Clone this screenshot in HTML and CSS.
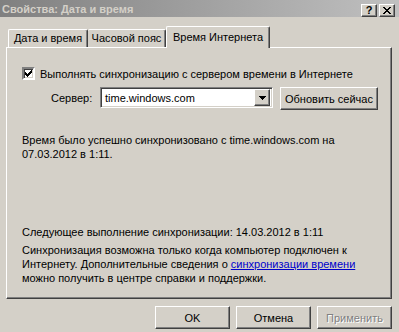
FILE: index.html
```html
<!DOCTYPE html>
<html lang="ru">
<head>
    <meta charset="UTF-8">
    <title>Свойства: Дата и время</title>
    <link rel="stylesheet" href="styles.css">
</head>
<body>
    <div class="window">
        <div class="titlebar">
            <span class="title">Свойства: Дата и время</span>
            <span class="cap-btn help">?</span>
            <span class="cap-btn close">
                <svg width="8" height="7" viewBox="0 0 8 7"><path d="M0 0h2v1h1v1h2V1h1V0h2v1H7v1H6v1H5v1h1v1h1v1h1v1H6V6H5V5H3v1H2v1H0V6h1V5h1V4h1V3H2V2H1V1H0z" fill="#000"/></svg>
            </span>
        </div>

        <div class="tabs">
            <div class="tab tab-date">Дата и время</div>
            <div class="tab tab-zone">Часовой пояс</div>
            <div class="tab tab-active">Время Интернета</div>
        </div>

        <div class="panel">
            <div class="check-row">
                <span class="checkbox">
                    <svg width="7" height="7" viewBox="0 0 7 7"><path d="M6 0h1v3H6v1H5v1H4v1H3v1H2V6H1V5H0V2h1v1h1v1h1V3h1V2h1V1h1z" fill="#000"/></svg>
                </span>
                <span>Выполнять синхронизацию с сервером времени в Интернете</span>
            </div>

            <div class="server-row">
                <span class="server-label">Сервер:</span>
                <div class="combo">
                    <span class="combo-value">time.windows.com</span>
                    <span class="combo-arrow">
                        <svg width="7" height="4" viewBox="0 0 7 4"><path d="M0 0h7v1H6v1H5v1H4v1H3V3H2V2H1V1H0z" fill="#000"/></svg>
                    </span>
                </div>
                <button class="button btn-update">Обновить сейчас</button>
            </div>

            <p class="status">Время было успешно синхронизовано с time.windows.com на<br>07.03.2012 в 1:11.</p>

            <p class="next">Следующее выполнение синхронизации: 14.03.2012 в 1:11</p>

            <p class="info">Синхронизация возможна только когда компьютер подключен к<br>Интернету. Дополнительные сведения о <a href="#">синхронизации времени</a><br>можно получить в центре справки и поддержки.</p>
        </div>

        <div class="footer">
            <button class="button">OK</button>
            <button class="button">Отмена</button>
            <button class="button" disabled>Применить</button>
        </div>
    </div>
</body>
</html>
```

FILE: styles.css
```css
body {
    margin: 0;
    padding: 0;
    background: #d4d0c8;
    font-family: 'Liberation Sans', Arial, sans-serif;
    font-size: 11px;
    line-height: 14px;
    color: #000;
    overflow: hidden;
}
.window {
    width: 399px;
    height: 332px;
    display: flex;
    flex-direction: column;
}
.titlebar {
    height: 17px;
    display: flex;
    align-items: center;
    padding: 0 4px 0 2px;
    background: linear-gradient(to right, #808080, #c0c0c0);
}
.title {
    color: #d4d0c8;
    font-weight: bold;
    flex: 1;
}
.cap-btn {
    width: 14px;
    height: 11px;
    margin-top: 3px;
    display: flex;
    align-items: center;
    justify-content: center;
    background: #d4d0c8;
    border-top: 1px solid #fff;
    border-left: 1px solid #fff;
    border-right: 1px solid #404040;
    border-bottom: 1px solid #404040;
    box-shadow: inset -1px -1px 0 #808080;
}
.help {
    font-weight: bold;
    font-size: 11px;
    line-height: 11px;
}
.close {
    margin-left: 2px;
}
.tabs {
    display: flex;
    align-items: flex-end;
    margin: 9px 0 0 8px;
    height: 21px;
    position: relative;
    z-index: 1;
}
.tab {
    height: 17px;
    box-sizing: border-box;
    padding-top: 1px;
    text-align: center;
    border-top: 1px solid #fff;
    border-left: 1px solid #fff;
    border-right: 1px solid #404040;
    border-radius: 2px 2px 0 0;
    box-shadow: inset -1px 0 0 #808080;
}
.tab-date {
    width: 80px;
    height: 18px;
}
.tab-zone {
    width: 78px;
    height: 18px;
    border-left: none;
}
.tab-active {
    width: 104px;
    height: 22px;
    margin-bottom: -1px;
    margin-left: 0;
    padding-top: 3px;
    background: #d4d0c8;
}
.panel {
    margin: 0 7px 0 6px;
    height: 252px;
    box-sizing: border-box;
    padding: 0 0 0 15px;
    border-top: 1px solid #fff;
    border-left: 1px solid #fff;
    border-right: 1px solid #404040;
    border-bottom: 1px solid #404040;
    box-shadow: inset -1px -1px 0 #808080;
}
.check-row {
    display: flex;
    align-items: center;
    height: 13px;
    margin-top: 19px;
}
.checkbox {
    width: 9px;
    height: 9px;
    margin-right: 5px;
    display: flex;
    align-items: center;
    justify-content: center;
    background: #fff;
    border-top: 2px solid #808080;
    border-left: 2px solid #808080;
    border-right: 2px solid #fff;
    border-bottom: 2px solid #fff;
    box-shadow: inset 1px 1px 0 #404040, inset -1px -1px 0 #d4d0c8;
}
.server-row {
    display: flex;
    align-items: flex-start;
    margin-top: 7px;
    height: 23px;
}
.server-label {
    margin: 4px 0 0 29px;
    width: 49px;
}
.combo {
    width: 173px;
    height: 21px;
    box-sizing: border-box;
    display: flex;
    align-items: center;
    background: #fff;
    border-top: 1px solid #808080;
    border-left: 1px solid #808080;
    border-right: 1px solid #fff;
    border-bottom: 1px solid #fff;
    box-shadow: inset 1px 1px 0 #404040, inset -1px -1px 0 #d4d0c8;
    padding: 2px;
}
.combo-value {
    flex: 1;
    padding-left: 2px;
}
.combo-arrow {
    width: 16px;
    height: 17px;
    box-sizing: border-box;
    display: flex;
    align-items: center;
    justify-content: center;
    background: #d4d0c8;
    border-top: 1px solid #fff;
    border-left: 1px solid #fff;
    border-right: 1px solid #404040;
    border-bottom: 1px solid #404040;
    box-shadow: inset -1px -1px 0 #808080;
}
.button {
    font-family: inherit;
    font-size: 11px;
    color: #000;
    background: #d4d0c8;
    height: 23px;
    padding: 0;
    border-top: 1px solid #fff;
    border-left: 1px solid #fff;
    border-right: 1px solid #404040;
    border-bottom: 1px solid #404040;
    box-shadow: inset -1px -1px 0 #808080;
}
.button:disabled {
    color: #808080;
    text-shadow: 1px 1px 0 #fff;
}
.btn-update {
    width: 98px;
    margin-left: 7px;
}
.status {
    margin: 23px 0 0 0;
}
.next {
    margin: 64px 0 0 0;
}
.info {
    margin: 4px 0 0 0;
}
.info a {
    color: #0000cc;
}
.footer {
    display: flex;
    justify-content: flex-end;
    gap: 6px;
    margin: 7px 7px 0 0;
}
.footer .button {
    width: 75px;
}
```
